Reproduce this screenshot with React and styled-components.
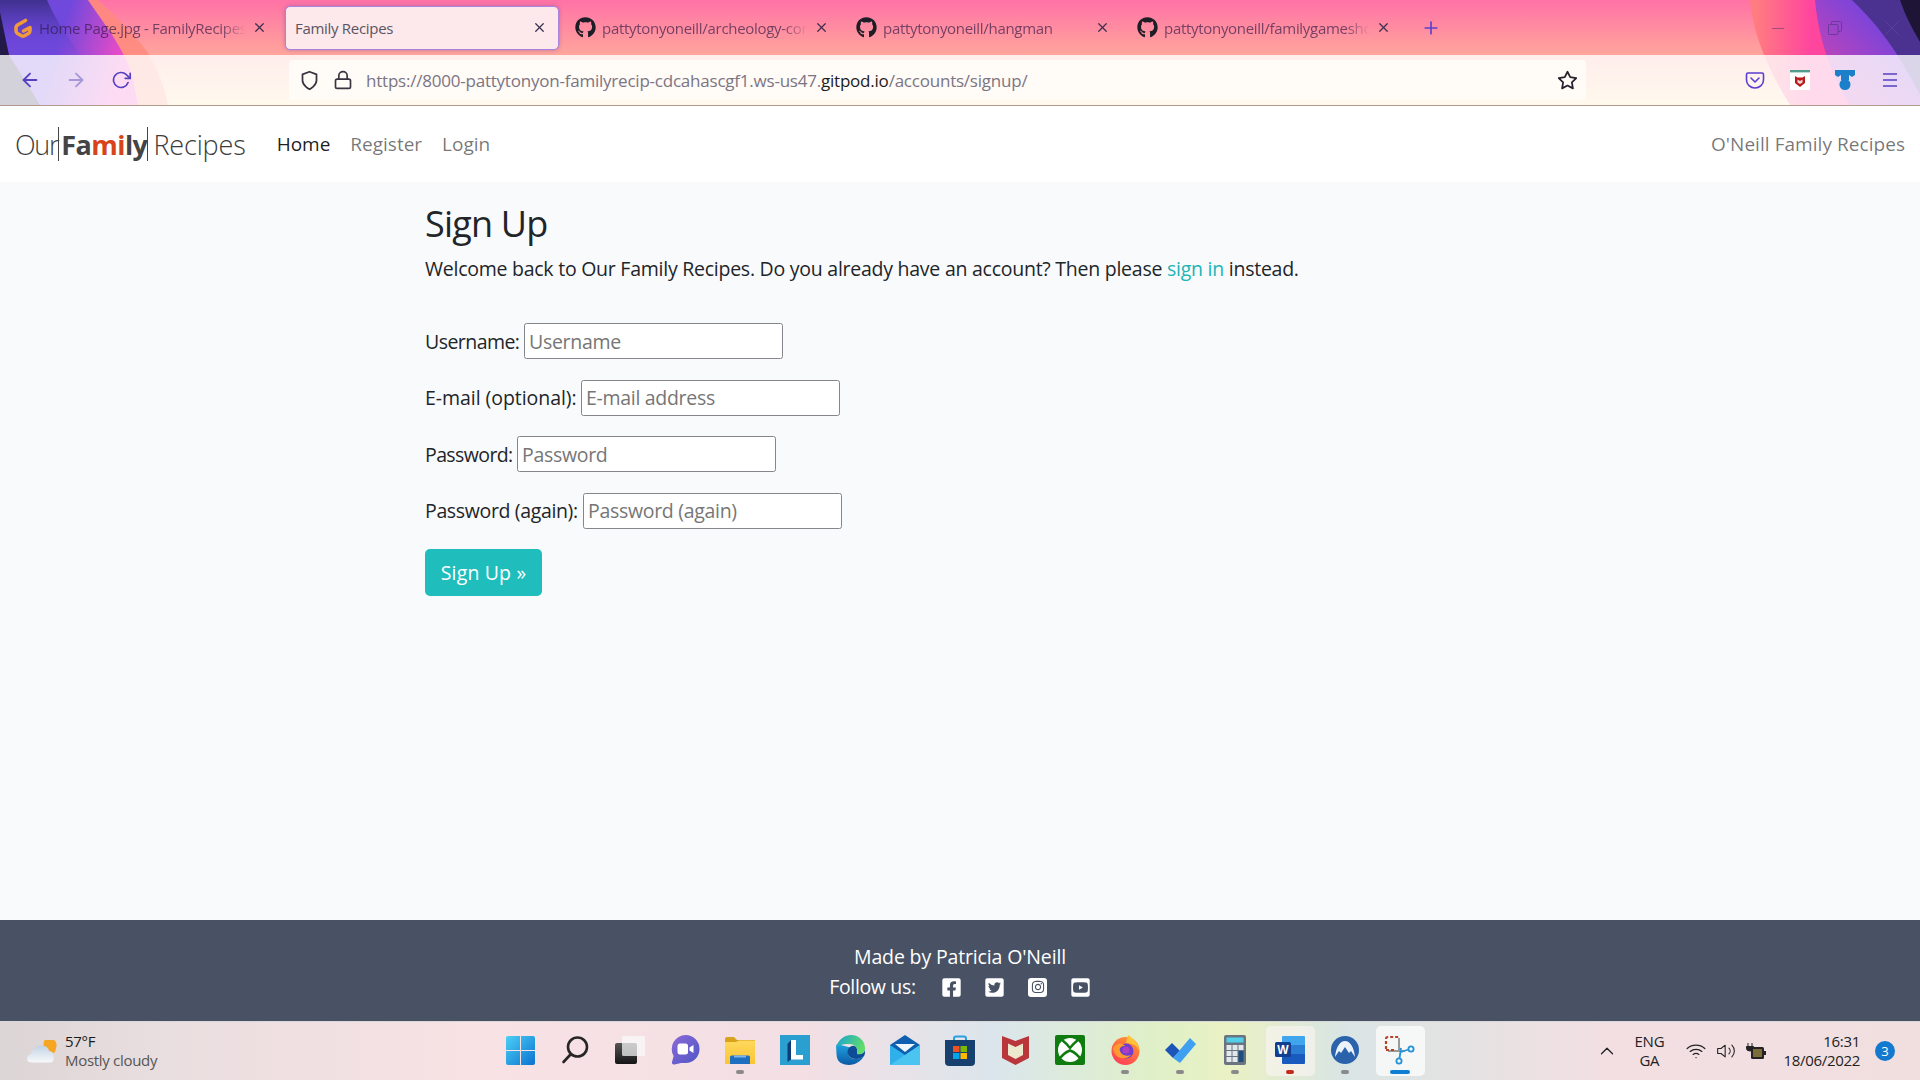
import React from 'react'
import styled, { createGlobalStyle } from 'styled-components'
import { FaGithub, FaFacebookSquare, FaTwitterSquare, FaInstagram, FaYoutubeSquare } from 'react-icons/fa'
import { FiArrowLeft, FiArrowRight, FiRotateCw, FiX, FiPlus, FiStar, FiShield, FiLock, FiChevronUp, FiVolume2, FiWifi } from 'react-icons/fi'

const UI_FONT = '"Open Sans", "Noto Sans", sans-serif'

const GlobalStyle = createGlobalStyle`
    html, body { margin: 0; padding: 0; }
    body { font-family: ${UI_FONT}; background: #f9fafc; color: #212529; }
    * { box-sizing: border-box; }
`

const tabs = [
    { title: 'Home Page.jpg - FamilyRecipes', icon: 'gitpod' },
    { title: 'Family Recipes', active: true },
    { title: 'pattytonyoneill/archeology-connect', icon: 'github' },
    { title: 'pattytonyoneill/hangman', icon: 'github' },
    { title: 'pattytonyoneill/familygameshow', icon: 'github' },
]

// label widths come from where each input starts in the form
const fields = [
    { label: 'Username:', placeholder: 'Username', width: 99, track: -0.55 },
    { label: 'E-mail (optional):', placeholder: 'E-mail address', width: 156, track: -0.05 },
    { label: 'Password:', placeholder: 'Password', width: 92, track: -0.6 },
    { label: 'Password (again):', placeholder: 'Password (again)', width: 158, track: -0.35 },
]

const GitpodIcon = () => (
    <svg width="20" height="22" viewBox="0 0 20 22">
        <path d="M12.5 3.5 L4.5 8 Q3 9 3 10.5 V13.5 Q3 15.5 4.5 16.5 L9 19 Q10 19.5 11 19 L15.5 16.5 Q17 15.5 17 13.5 V10.5 L10.5 14" fill="none" stroke="#f09a3a" strokeWidth="3.6" strokeLinecap="round" strokeLinejoin="round" />
    </svg>
)

const PocketIcon = () => (
    <svg width="20" height="20" viewBox="0 0 20 20" fill="none" stroke="#5b3fd0" strokeWidth="1.6" strokeLinecap="round" strokeLinejoin="round">
        <path d="M3 3 H17 Q18.5 3 18.5 4.5 V10 A8.5 8 0 0 1 1.5 10 V4.5 Q1.5 3 3 3 Z" />
        <path d="M6 8 L10 12 L14 8" />
    </svg>
)

const McafeeExt = () => (
    <svg width="20" height="20" viewBox="0 0 20 20">
        <rect width="20" height="20" fill="#fff" />
        <rect width="20" height="2.4" fill="#4f9d8a" />
        <path d="M5 6 L7.5 7.5 H12.5 L15 6 V13 L10 17 L5 13 Z" fill="#b71c1c" />
        <path d="M7.5 9.5 V12.5 L10 14 L12.5 12.5 V9.5 L10 11 Z" fill="#f3d6d6" />
    </svg>
)

const MedalExt = () => (
    <svg width="20" height="20" viewBox="0 0 20 20">
        <path d="M0 0 H20 V5 L17 7 L14 5 V10 H6 V5 L3 7 L0 5 Z" fill="#1b7fc9" />
        <circle cx="10" cy="14.5" r="5.5" fill="#1b7fc9" />
    </svg>
)

const MenuIcon = () => (
    <svg width="20" height="20" viewBox="0 0 20 20" stroke="#5540c0" strokeWidth="1.5">
        <path d="M3 4 H17 M3 10 H17 M3 16 H17" />
    </svg>
)

const MinimizeIcon = () => (
    <svg width="14" height="14" viewBox="0 0 14 14" stroke="#a84a80" strokeWidth="1">
        <path d="M1 7.5 H13" />
    </svg>
)

const RestoreIcon = () => (
    <svg width="14" height="14" viewBox="0 0 14 14" fill="none" stroke="#6a3a98" strokeWidth="1">
        <rect x="0.5" y="3.5" width="9.5" height="10" rx="1" />
        <path d="M3.5 3.5 V1.5 Q3.5 0.5 4.5 0.5 H12.5 Q13.5 0.5 13.5 1.5 V9.5 Q13.5 10.5 12.5 10.5 H10" />
    </svg>
)

const CloseIcon = () => (
    <svg width="16" height="16" viewBox="0 0 16 16" stroke="#5a3e9c" strokeWidth="1">
        <path d="M1 1 L15 15 M15 1 L1 15" />
    </svg>
)

const WindowsIcon = () => (
    <svg width="29" height="29" viewBox="0 0 29 29">
        <defs>
            <linearGradient id="winFill" x1="0" y1="0" x2="1" y2="1">
                <stop offset="0" stopColor="#4cd0f6" />
                <stop offset="1" stopColor="#0b72d0" />
            </linearGradient>
        </defs>
        <path d="M2 0 H14 V14 H0 V2 Q0 0 2 0 Z M15 0 H27 Q29 0 29 2 V14 H15 Z M0 15 H14 V29 H2 Q0 29 0 27 Z M15 15 H29 V27 Q29 29 27 29 H15 Z" fill="url(#winFill)" />
    </svg>
)

const SearchIcon = () => (
    <svg width="28" height="28" viewBox="0 0 28 28" fill="none" stroke="#262626" strokeWidth="2.6" strokeLinecap="round">
        <circle cx="16.5" cy="11" r="9.5" />
        <path d="M9.5 18.5 L2.5 26" />
    </svg>
)

const TaskViewIcon = () => (
    <svg width="30" height="29" viewBox="0 0 30 29">
        <defs>
            <linearGradient id="taskFront" x1="0" y1="0" x2="0" y2="1">
                <stop offset="0" stopColor="#555" />
                <stop offset="1" stopColor="#151515" />
            </linearGradient>
        </defs>
        <rect x="0" y="7" width="22" height="21" rx="2" fill="url(#taskFront)" />
        <rect x="7" y="0" width="23" height="20" rx="1.5" fill="#fafafa" fillOpacity="0.72" />
    </svg>
)

const ChatIcon = () => (
    <svg width="29" height="30" viewBox="0 0 29 30">
        <defs>
            <linearGradient id="chatFill" x1="0" y1="0" x2="1" y2="1">
                <stop offset="0" stopColor="#8a6ad8" />
                <stop offset="1" stopColor="#4f55c4" />
            </linearGradient>
        </defs>
        <path d="M14.5 0 A14 14 0 1 1 14.5 28 H10 L3.5 29.5 Q0.5 30 1 27 L2.6 21 A14 14 0 0 1 14.5 0 Z" fill="url(#chatFill)" />
        <rect x="6.5" y="8.5" width="10.5" height="11" rx="2.5" fill="#fff" />
        <path d="M18.5 12.5 L22.5 10 V18 L18.5 15.5 Z" fill="#fff" />
    </svg>
)

const FolderIcon = () => (
    <svg width="30" height="27" viewBox="0 0 30 27">
        <defs>
            <linearGradient id="folderFill" x1="0" y1="0" x2="0" y2="1">
                <stop offset="0" stopColor="#ffd85e" />
                <stop offset="1" stopColor="#fbc531" />
            </linearGradient>
        </defs>
        <path d="M0 2 Q0 0 2 0 H9 L12 3 H30 V8 H0 Z" fill="#d9a21c" />
        <path d="M0 5 H11 L14 3.5 H30 V27 H0 Z" fill="url(#folderFill)" />
        <path d="M5 27 V20 Q5 18.5 6.5 18.5 H23.5 Q25 18.5 25 20 V27 Z" fill="#1f6fc0" />
        <rect x="9" y="18.5" width="12" height="2" fill="#7fb6e8" />
    </svg>
)

const LetterLIcon = () => (
    <svg width="30" height="30" viewBox="0 0 30 30">
        <rect width="30" height="30" fill="#2a9fd0" />
        <path d="M11 5 H16 V20 H23 V24.5 H11 Z" fill="#fff" />
        <path d="M11 5 L7.5 9 V27 L11 24.5 Z" fill="#0d3d78" />
    </svg>
)

const EdgeIcon = () => (
    <svg width="30" height="30" viewBox="0 0 30 30">
        <defs>
            <linearGradient id="edgeBody" x1="0" y1="0" x2="0" y2="1">
                <stop offset="0" stopColor="#1fa3e0" />
                <stop offset="1" stopColor="#0c5aa6" />
            </linearGradient>
            <linearGradient id="edgeTop" x1="0" y1="0" x2="1" y2="0.4">
                <stop offset="0" stopColor="#18a0d8" />
                <stop offset="1" stopColor="#5fdc6a" />
            </linearGradient>
        </defs>
        <path d="M1 11 C2 20 0 27 10 29.5 C18 31.5 26 27 29 21 C24 25 17 25 14 21 C12 18 13 14 17 13 L2 9 Z" fill="url(#edgeBody)" />
        <path d="M1 13 C3 4 10 0 16 0 C24 0 30 6 30 13 C30 18 26 20 22 19 C24 14 20 9 14 9 C8 9 3 10 1 13 Z" fill="url(#edgeTop)" />
        <path d="M14 21 C11 17 13 12 17 11 C21 10 23 14 22 19 C25 20 29 19 30 15 C30 18 30 19 29 21 C25 25 17 25 14 21 Z" fill="#0d4d96" />
    </svg>
)

const MailIcon = () => (
    <svg width="30" height="30" viewBox="0 0 30 30">
        <path d="M15 0 L30 10 V20 H0 V10 Z" fill="#0f5fb0" />
        <path d="M5 9 H25 L15 17 Z" fill="#eef6fc" />
        <path d="M0 10 L15 20 L30 10 V30 H0 Z" fill="#2fb0ea" />
        <path d="M30 10 V30 H0 L15 20 Z" fill="#4cc4f2" />
    </svg>
)

const StoreIcon = () => (
    <svg width="30" height="31" viewBox="0 0 30 31">
        <path d="M9 7 V3.5 Q9 1.5 11 1.5 H19 Q21 1.5 21 3.5 V7" fill="none" stroke="#2aa0e0" strokeWidth="2" />
        <path d="M0 5 H30 V27 Q30 31 26 31 H4 Q0 31 0 27 Z" fill="#17406e" />
        <rect x="8" y="11" width="6.5" height="6" fill="#f25022" />
        <rect x="15.5" y="11" width="6.5" height="6" fill="#7fba00" />
        <rect x="8" y="18" width="6.5" height="6" fill="#00a4ef" />
        <rect x="15.5" y="18" width="6.5" height="6" fill="#ffb900" />
    </svg>
)

const McafeeIcon = () => (
    <svg width="27" height="30" viewBox="0 0 27 30">
        <path d="M0 1 L13.5 6 L27 1 V23 L13.5 30 L0 23 Z" fill="#b9373a" />
        <path d="M6 8.5 L13.5 12 L21 8.5 V20 L13.5 24 L6 20 Z" fill="#ece9cf" />
    </svg>
)

const XboxIcon = () => (
    <svg width="30" height="30" viewBox="0 0 30 30">
        <rect width="30" height="30" rx="2" fill="#107c10" />
        <circle cx="15" cy="15" r="12" fill="#fff" />
        <path d="M6 4 Q12 9 15 13 Q18 9 24 4 M4 25 Q8 18 15 15.5 Q22 18 26 25" fill="none" stroke="#107c10" strokeWidth="2.4" />
    </svg>
)

const FirefoxIcon = () => (
    <svg width="29" height="30" viewBox="0 0 29 30">
        <defs>
            <linearGradient id="foxBody" x1="0.8" y1="0" x2="0.2" y2="1">
                <stop offset="0" stopColor="#ff9a2e" />
                <stop offset="1" stopColor="#ff3a5a" />
            </linearGradient>
        </defs>
        <circle cx="14.5" cy="16" r="14" fill="url(#foxBody)" />
        <path d="M17 0 C23 4 28 9 28.5 16 C26 10 20 8 15 8 Z" fill="#ffc238" />
        <circle cx="15" cy="16" r="7.5" fill="#6d3ed0" />
        <circle cx="15" cy="15" r="3.5" fill="#b03ec0" />
        <path d="M2 13 C6 7 12 8 14 11 C10 11 8 13 9 16 C10 19 14 22 20 20 C15 26 3 24 2 13 Z" fill="#ff9a2e" />
    </svg>
)

const TodoIcon = () => (
    <svg width="31" height="26" viewBox="0 0 31 26">
        <path d="M0 13 L7 6 L15 14 L8 21 Z" fill="#1d54b8" />
        <path d="M8 21 L25 1 L31 7 L15 26 Z" fill="#3fa0f2" />
    </svg>
)

const CalcIcon = () => (
    <svg width="22" height="30" viewBox="0 0 22 30">
        <rect width="22" height="30" rx="2" fill="#6a7480" />
        <rect x="2.5" y="2.5" width="17" height="5" fill="#52d0ea" />
        <rect x="2.5" y="10" width="5" height="5" fill="#e3e8eb" />
        <rect x="8.5" y="10" width="5" height="5" fill="#e3e8eb" />
        <rect x="14.5" y="10" width="5" height="5" fill="#e3e8eb" />
        <rect x="2.5" y="16" width="5" height="5" fill="#e3e8eb" />
        <rect x="8.5" y="16" width="5" height="5" fill="#e3e8eb" />
        <rect x="14.5" y="16" width="5" height="11" fill="#1d4f7c" />
        <rect x="2.5" y="22" width="5" height="5" fill="#e3e8eb" />
        <rect x="8.5" y="22" width="5" height="5" fill="#e3e8eb" />
    </svg>
)

const WordIcon = () => (
    <svg width="30" height="28" viewBox="0 0 30 28">
        <rect x="7" y="0" width="23" height="10" rx="1" fill="#41a5ee" />
        <rect x="7" y="9" width="23" height="10" fill="#2b7cd3" />
        <rect x="7" y="18" width="23" height="10" rx="1" fill="#185abd" />
        <rect x="0" y="6" width="16" height="15" rx="1.5" fill="#103f91" />
        <text x="8" y="17.5" textAnchor="middle" fontSize="12" fontWeight="700" fill="#fff" fontFamily="Liberation Sans, sans-serif">W</text>
    </svg>
)

const NordIcon = () => (
    <svg width="28" height="28" viewBox="0 0 28 28">
        <circle cx="14" cy="14" r="14" fill="#2a63ac" />
        <path d="M4 21 C5 11 9 5 14 5 C19 5 23 11 24 21 L20 15 L18 17 L14 11 L10 17 L8 15 Z" fill="#eaf3fb" />
    </svg>
)

const SnipIcon = () => (
    <svg width="32" height="30" viewBox="0 0 32 30" fill="none">
        <path d="M15 16 V3 M4 16 H21" stroke="#9a9a9a" strokeWidth="2" />
        <path d="M2 14 V4 Q2 2 4 2 H15" stroke="#b5442a" strokeWidth="2.2" strokeDasharray="3 2" />
        <path d="M2 15 H12" stroke="#b5442a" strokeWidth="2.2" strokeDasharray="3 2" />
        <circle cx="27" cy="14" r="2.6" stroke="#2593d8" strokeWidth="1.8" />
        <circle cx="15" cy="26" r="2.6" stroke="#2593d8" strokeWidth="1.8" />
        <path d="M15.5 23.5 L17 13 M24.5 14.5 L17 17" stroke="#2593d8" strokeWidth="1.8" />
    </svg>
)

const BatteryIcon = () => (
    <svg width="20" height="18" viewBox="0 0 20 18">
        <path d="M2 1 V4 M6 1 V4 M0.5 4.5 H7.5 V6.5 Q7.5 9 4 9 Q0.5 9 0.5 6.5 Z" fill="#222" stroke="#222" strokeWidth="1" />
        <rect x="5" y="5" width="13" height="12" rx="1.5" fill="#222" />
        <rect x="7" y="7" width="9" height="8" fill="#7c6c3a" />
        <rect x="18" y="9" width="2" height="4" fill="#222" />
    </svg>
)

const WeatherIcon = () => (
    <svg width="30" height="23" viewBox="0 0 30 23">
        <defs>
            <linearGradient id="cloudFill" x1="0" y1="0" x2="0" y2="1">
                <stop offset="0" stopColor="#c3d3e4" />
                <stop offset="1" stopColor="#f6f9fb" />
            </linearGradient>
        </defs>
        <path d="M17 1 A7 7 0 0 1 29 8 Q29 11 27 13 L16 9 Z" fill="#f6a623" />
        <path d="M5 22.5 C-2 22.5 -1 15 4 14 C5 9 10 4 15 6 C19 5 22 9 22 11 C28 11 28 22 24 22.5 Z" fill="url(#cloudFill)" />
    </svg>
)

const taskbarIcons = [
    { Icon: WindowsIcon },
    { Icon: SearchIcon },
    { Icon: TaskViewIcon },
    { Icon: ChatIcon },
    { Icon: FolderIcon, dot: '#8a8a8a' },
    { Icon: LetterLIcon },
    { Icon: EdgeIcon },
    { Icon: MailIcon },
    { Icon: StoreIcon },
    { Icon: McafeeIcon },
    { Icon: XboxIcon },
    { Icon: FirefoxIcon, dot: '#8a8a8a' },
    { Icon: TodoIcon, dot: '#8a8a8a' },
    { Icon: CalcIcon, dot: '#8a8a8a' },
    { Icon: WordIcon, dot: '#c42b1c', highlight: 'rgba(255, 246, 247, 0.55)' },
    { Icon: NordIcon, dot: '#8a8a8a' },
    { Icon: SnipIcon, dot: '#0f7fd6', wide: true, highlight: 'rgba(255, 255, 255, 0.7)' },
]

export default function App() {
    return (
        <Page>
            <GlobalStyle />
            <BrowserChrome>
                <Wallpaper viewBox="0 0 1920 105" preserveAspectRatio="none">
                    <defs>
                        <linearGradient id="leftBand" gradientUnits="userSpaceOnUse" x1="40" y1="0" x2="135" y2="30">
                            <stop offset="0.3" stopColor="#7048dc" />
                            <stop offset="1" stopColor="#f64cc4" />
                        </linearGradient>
                        <linearGradient id="leftTop" x1="0" y1="0" x2="0" y2="1">
                            <stop offset="0" stopColor="#40308e" />
                            <stop offset="0.6" stopColor="#6545d4" stopOpacity="0.6" />
                            <stop offset="1" stopColor="#7048dc" stopOpacity="0" />
                        </linearGradient>
                        <linearGradient id="rightHot" gradientUnits="userSpaceOnUse" x1="1755" y1="0" x2="1810" y2="0">
                            <stop offset="0" stopColor="#ff7d80" />
                            <stop offset="1" stopColor="#ff469e" />
                        </linearGradient>
                        <linearGradient id="rightBand" gradientUnits="userSpaceOnUse" x1="1830" y1="60" x2="1880" y2="10">
                            <stop offset="0" stopColor="#b844bc" />
                            <stop offset="1" stopColor="#7044e0" />
                        </linearGradient>
                    </defs>
                    <path d="M0 0 H98 C122 22 145 45 152 60 C160 75 165 90 168 105 H0 Z" fill="#ff8a7c" fillOpacity="0.85" />
                    <path d="M0 0 H88 C105 25 125 50 132 75 L138 105 H0 Z" fill="url(#leftBand)" />
                    <path d="M0 0 H47 C58 25 72 45 88 62 L0 62 Z" fill="url(#leftTop)" />
                    <path d="M0 12 L9 55 L40 105 H0 Z" fill="#231a48" />
                    <path d="M1920 0 H1750 C1752 25 1762 60 1790 105 H1920 Z" fill="url(#rightHot)" />
                    <path d="M1920 0 H1815 C1818 35 1830 75 1850 105 H1920 Z" fill="url(#rightBand)" />
                    <path d="M1920 0 H1852 C1872 20 1892 40 1920 95 Z" fill="#4b3190" />
                    <path d="M1920 0 H1900 C1905 15 1913 30 1920 42 Z" fill="#1e1436" />
                </Wallpaper>
                <TabStrip>
                    {tabs.map((tab) => (
                        <Tab key={tab.title} $active={tab.active}>
                            {tab.icon === 'gitpod' && <GitpodIcon />}
                            {tab.icon === 'github' && <FaGithub size={21} color="#1d1d26" />}
                            <TabTitle $active={tab.active}>{tab.title}</TabTitle>
                            <FiX size={15} color="#3c3050" />
                        </Tab>
                    ))}
                    <NewTab><FiPlus size={20} color="#5b3fd0" /></NewTab>
                    <WindowControls>
                        <MinimizeIcon />
                        <RestoreIcon />
                        <CloseIcon />
                    </WindowControls>
                </TabStrip>
                <Toolbar>
                    <NavButtons>
                        <FiArrowLeft size={22} color="#5540c0" />
                        <FiArrowRight size={22} color="#a598d8" />
                        <FiRotateCw size={20} color="#5540c0" />
                    </NavButtons>
                    <UrlBar>
                        <FiShield size={21} color="#3a3440" />
                        <FiLock size={20} color="#3a3440" />
                        <UrlText>https://8000-pattytonyon-familyrecip-cdcahascgf1.ws-us47.<strong>gitpod.io</strong>/accounts/signup/</UrlText>
                        <FiStar size={21} color="#26222c" />
                    </UrlBar>
                    <Extensions>
                        <PocketIcon />
                        <McafeeExt />
                        <MedalExt />
                        <MenuIcon />
                    </Extensions>
                </Toolbar>
            </BrowserChrome>

            <Navbar>
                <Brand>
                    <BrandOur>Our</BrandOur><BrandBar />
                    <BrandBold>Fa<BrandAccent>mi</BrandAccent>ly</BrandBold><BrandBar />
                    <BrandTail>Recipes</BrandTail>
                </Brand>
                <NavLinks>
                    <NavLink $active>Home</NavLink>
                    <NavLink>Register</NavLink>
                    <NavLink>Login</NavLink>
                </NavLinks>
                <NavRight>O'Neill Family Recipes</NavRight>
            </Navbar>

            <Main>
                <Container>
                    <Heading>Sign Up</Heading>
                    <Intro>Welcome back to Our Family Recipes. Do you already have an account? Then please <SignIn>sign in</SignIn> instead.</Intro>
                    <Form>
                        {fields.map((field) => (
                            <FormRow key={field.label}>
                                <FieldLabel $width={field.width} $track={field.track}>{field.label}</FieldLabel>
                                <Input placeholder={field.placeholder} />
                            </FormRow>
                        ))}
                        <SubmitButton type="button">Sign Up »</SubmitButton>
                    </Form>
                </Container>
            </Main>

            <Footer>
                <div>Made by Patricia O'Neill</div>
                <FollowRow>
                    Follow us:
                    <Socials>
                        <FaFacebookSquare size={21} />
                        <FaTwitterSquare size={21} />
                        <InstaTile><FaInstagram size={14} /></InstaTile>
                        <FaYoutubeSquare size={21} />
                    </Socials>
                </FollowRow>
            </Footer>

            <Taskbar>
                <Weather>
                    <WeatherIcon />
                    <WeatherText>
                        <span>57°F</span>
                        <WeatherSub>Mostly cloudy</WeatherSub>
                    </WeatherText>
                </Weather>
                <TaskIcons>
                    {taskbarIcons.map(({ Icon, dot, wide, highlight }, i) => (
                        <TaskSlot key={i} $highlight={highlight}>
                            <Icon />
                            {dot && <TaskDot $color={dot} $wide={wide} />}
                        </TaskSlot>
                    ))}
                </TaskIcons>
                <Tray>
                    <FiChevronUp size={22} color="#222" strokeWidth={1.4} />
                    <Lang><span>ENG</span><span>GA</span></Lang>
                    <TrayIcons>
                        <FiWifi size={20} color="#222" strokeWidth={1.5} />
                        <FiVolume2 size={20} color="#222" strokeWidth={1.3} />
                        <BatteryIcon />
                    </TrayIcons>
                    <Clock><span>16:31</span><span>18/06/2022</span></Clock>
                    <Badge>3</Badge>
                </Tray>
            </Taskbar>
        </Page>
    )
}

const Page = styled.div`
    display: flex;
    flex-direction: column;
    height: 1080px;
    overflow: hidden;
`
const BrowserChrome = styled.div`
    height: 106px;
    flex: none;
    position: relative;
    background: linear-gradient(180deg, #ff72a6 0%, #ffa59c 52%, #ffe0a8 100%);
    border-bottom: 1px solid #b39a8c;
`
const Wallpaper = styled.svg`
    position: absolute;
    left: 0;
    top: 0;
    width: 100%;
    height: 105px;
`
const TabStrip = styled.div`
    position: relative;
    height: 55px;
    display: flex;
    align-items: center;
    gap: 7px;
    padding-left: 4px;
`
const Tab = styled.div`
    position: relative;
    width: 274px;
    height: 44px;
    display: flex;
    align-items: center;
    gap: 6px;
    padding: 0 11px 0 9px;
    border-radius: 5px;
    background: ${({ $active }) => ($active ? '#fde8ec' : 'transparent')};
    border: ${({ $active }) => ($active ? '1.5px solid #a983dd' : '0')};
    box-shadow: ${({ $active }) => ($active ? '0 0 4px rgba(90, 60, 160, 0.4)' : 'none')};
`
const TabTitle = styled.span`
    flex: 1;
    font-size: 15px;
    letter-spacing: -0.3px;
    color: ${({ $active }) => ($active ? '#5a5560' : 'rgba(50, 25, 70, 0.68)')};
    white-space: nowrap;
    overflow: hidden;
    mask-image: ${({ $active }) => ($active ? 'none' : 'linear-gradient(90deg, #000 88%, transparent 100%)')};
`
const NewTab = styled.div`
    display: flex;
    margin-left: 12px;
`
const WindowControls = styled.div`
    margin-left: auto;
    width: 129px;
    margin-right: 20px;
    display: flex;
    align-items: center;
    justify-content: space-between;
`
const Toolbar = styled.div`
    position: relative;
    height: 50px;
    display: flex;
    align-items: center;
    background: rgba(255, 255, 255, 0.8);
`
const NavButtons = styled.div`
    width: 289px;
    padding: 0 158px 0 19px;
    display: flex;
    align-items: center;
    justify-content: space-between;
`
const UrlBar = styled.div`
    width: 1297px;
    height: 40px;
    display: flex;
    align-items: center;
    gap: 13px;
    padding: 0 8px 0 10px;
    background: #fffbf7;
    border-radius: 4px;
`
const UrlText = styled.div`
    flex: 1;
    padding-top: 1px;
    font-size: 17px;
    letter-spacing: -0.22px;
    color: #7b7583;
    white-space: nowrap;
    strong { font-weight: 400; color: #1c1b22; }
`
const Extensions = styled.div`
    flex: 1;
    display: flex;
    align-items: center;
    justify-content: flex-end;
    gap: 25px;
    padding-right: 20px;
`
const Navbar = styled.nav`
    height: 76px;
    flex: none;
    display: flex;
    align-items: center;
    padding: 0 15px;
    background: #fff;
`
const Brand = styled.div`
    display: flex;
    align-items: center;
    font-size: 27px;
    font-weight: 300;
    letter-spacing: -0.55px;
    color: #3c3c3c;
`
const BrandOur = styled.span`
    letter-spacing: -1.3px;
`
const BrandTail = styled.span`
    margin-left: 3px;
    letter-spacing: -0.15px;
`
const BrandBar = styled.span`
    width: 1px;
    height: 34px;
    margin: 0 2px 0 0;
    background: #444;
`
const BrandBold = styled.span`
    font-weight: 700;
    color: #444;
`
const BrandAccent = styled.span`
    color: #d8431b;
`
const NavLinks = styled.div`
    display: flex;
    gap: 20px;
    margin-left: 31px;
`
const NavLink = styled.a`
    font-size: 19px;
    letter-spacing: 0;
    color: ${({ $active }) => ($active ? 'rgba(0, 0, 0, 0.9)' : 'rgba(0, 0, 0, 0.55)')};
`
const NavRight = styled.div`
    margin-left: auto;
    font-size: 19px;
    letter-spacing: 0.05px;
    color: rgba(0, 0, 0, 0.55);
`
const Main = styled.main`
    flex: 1;
    background: #f9fafc;
`
const Container = styled.div`
    width: 1070px;
    margin: 0 auto;
    padding-top: 18px;
`
const Heading = styled.h1`
    margin: 0;
    font-size: 36px;
    line-height: 48px;
    font-weight: 400;
    letter-spacing: -0.8px;
`
const Intro = styled.p`
    margin: 6px 0 0;
    font-size: 19.5px;
    line-height: 30px;
    letter-spacing: -0.25px;
`
const SignIn = styled.a`
    color: #22b5b5;
`
const Form = styled.form`
    margin-top: 39px;
    display: flex;
    flex-direction: column;
    align-items: flex-start;
    gap: 20.5px;
`
const FormRow = styled.div`
    display: flex;
    align-items: center;
    height: 36px;
    font-size: 19.5px;
`
const FieldLabel = styled.label`
    width: ${({ $width }) => $width}px;
    letter-spacing: ${({ $track }) => $track}px;
    white-space: nowrap;
`
const Input = styled.input`
    width: 259px;
    height: 36px;
    padding: 0 4px;
    font-family: ${UI_FONT};
    font-size: 19.5px;
    letter-spacing: -0.3px;
    color: #212529;
    background: #fff;
    border: 1px solid #85858c;
    border-radius: 2.5px;
    &::placeholder { color: #767676; }
`
const SubmitButton = styled.button`
    width: 117px;
    height: 47px;
    font-family: ${UI_FONT};
    font-size: 19.5px;
    letter-spacing: 0.15px;
    color: #fff;
    background: #20bdbd;
    border: 0;
    border-radius: 5px;
`
const Footer = styled.footer`
    height: 101px;
    flex: none;
    padding-top: 22px;
    display: flex;
    flex-direction: column;
    align-items: center;
    background: #485264;
    color: #fff;
    font-size: 19.5px;
    letter-spacing: -0.15px;
    line-height: 30px;
`
const FollowRow = styled.div`
    display: flex;
    align-items: center;
    gap: 25px;
    letter-spacing: -0.35px;
`
const Socials = styled.div`
    display: flex;
    align-items: center;
    gap: 22.7px;
`
const InstaTile = styled.span`
    width: 19px;
    height: 19px;
    display: flex;
    align-items: center;
    justify-content: center;
    background: #fff;
    color: #485264;
    border-radius: 3px;
`
const Taskbar = styled.div`
    height: 59px;
    flex: none;
    display: grid;
    grid-template-columns: 1fr auto 1fr;
    align-items: center;
    background: linear-gradient(90deg, #dcd5d5 0%, #e9dedf 8%, #f8e2e4 25%, #f3dfe4 42%, #dbe6ec 52%, #dff0c8 60%, #eaf1c4 64%, #d9e5e4 70%, #f3dfe2 84%, #f1dfe0 100%);
    border-top: 1px solid #d8d8d8;
`
const Weather = styled.div`
    display: flex;
    align-items: center;
    gap: 8px;
    padding-left: 27px;
`
const WeatherText = styled.div`
    display: flex;
    flex-direction: column;
    font-size: 15px;
    letter-spacing: -0.3px;
    line-height: 19px;
    color: #1a1a1a;
`
const WeatherSub = styled.span`
    color: #555;
`
const TaskIcons = styled.div`
    display: flex;
    align-items: center;
`
const TaskSlot = styled.div`
    position: relative;
    width: 55px;
    height: 50px;
    display: flex;
    align-items: center;
    justify-content: center;
    svg { position: relative; margin-top: -2px; }
    &::before {
        content: '';
        position: absolute;
        inset: 0 3px;
        border-radius: 5px;
        background: ${({ $highlight }) => $highlight || 'transparent'};
    }
`
const TaskDot = styled.span`
    position: absolute;
    bottom: 2px;
    left: 50%;
    transform: translateX(-50%);
    width: ${({ $wide }) => ($wide ? '20px' : '8px')};
    height: 4px;
    border-radius: 2px;
    background: ${({ $color }) => $color};
`
const Tray = styled.div`
    display: flex;
    align-items: center;
    justify-content: flex-end;
    padding-right: 25px;
`
const Lang = styled.div`
    margin-left: 3px;
    width: 56px;
    display: flex;
    flex-direction: column;
    align-items: center;
    font-size: 15px;
    line-height: 19px;
    letter-spacing: -0.2px;
    color: #222;
`
const TrayIcons = styled.div`
    margin-left: 9px;
    display: flex;
    align-items: center;
    gap: 10px;
`
const Clock = styled.div`
    margin-left: 17px;
    display: flex;
    flex-direction: column;
    align-items: flex-end;
    font-size: 15px;
    line-height: 19px;
    letter-spacing: -0.3px;
    color: #222;
`
const Badge = styled.span`
    margin-left: 15px;
    width: 20px;
    height: 20px;
    display: flex;
    align-items: center;
    justify-content: center;
    border-radius: 50%;
    background: #1379cf;
    color: #fff;
    font-size: 13px;
`
